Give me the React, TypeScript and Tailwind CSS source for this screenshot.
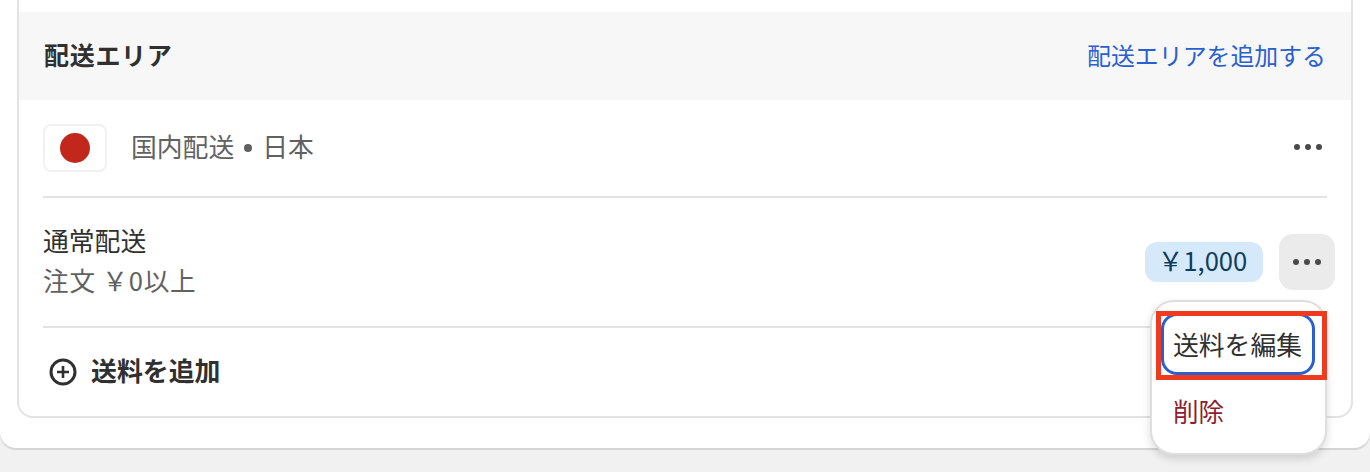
const font = { cjk: "font-['Noto_Sans_CJK_JP','Noto_Sans',sans-serif]" };

function Dots() {
  return (
    <span className="flex items-center gap-[5px]">
      <span className="w-[6px] h-[6px] rounded-full bg-[#4a4a4a]" />
      <span className="w-[6px] h-[6px] rounded-full bg-[#4a4a4a]" />
      <span className="w-[6px] h-[6px] rounded-full bg-[#4a4a4a]" />
    </span>
  );
}

export default function App() {
  return (
    <div className={`relative h-[472px] w-[1370px] overflow-hidden bg-[#f1f1f1] ${font.cjk}`}>
      {/* Outer card */}
      <div className="h-[448px] bg-white rounded-b-[16px] pl-[17px] pr-[17px] shadow-[0_2px_1px_#d4d4d4]">
        {/* Shipping zone panel */}
        <div className="h-[418px] pt-[12px] border-x-[2px] border-b-[2px] border-[#e3e3e3] rounded-b-[16px]">
          <div className="h-[88px] bg-[#f7f7f7] flex items-center justify-between pl-[25px] pr-[25px] pb-[3px]">
            <h2 className="text-[25px] font-bold text-[#303030] tracking-[0.7px]">配送エリア</h2>
            <a className="text-[23.9px] text-[#2a5fcf]">配送エリアを追加する</a>
          </div>

          <div className="mx-[24px]">
            <div className="h-[98px] flex items-center border-b-[2px] border-[#e3e3e3]">
              <div className="w-[64px] h-[48px] flex items-center justify-center border-[2px] border-[#f1f1f1] rounded-[8px]">
                <span className="w-[30px] h-[30px] rounded-full bg-[#c1281b]" />
              </div>
              <span className="ml-[24px] mb-[3px] flex items-center text-[25.8px] text-[#616161]">
                国内配送
                <span className="mx-[10px] mt-[3px] w-[8px] h-[8px] rounded-full bg-[#616161]" />
                日本
              </span>
              <span className="ml-auto mr-[5px] mb-[2px]">
                <Dots />
              </span>
            </div>

            <div className="h-[130px] flex items-center border-b-[2px] border-[#e3e3e3]">
              <div className="flex flex-col mb-[4px]">
                <span className="text-[25.8px] leading-[40px] text-[#303030]">通常配送</span>
                <span className="text-[25.6px] leading-[40px] text-[#616161] tracking-[0.8px]">注文 ￥0以上</span>
              </div>
              <div className="ml-auto mr-[-8px] flex items-center gap-[16px]">
                <span className="h-[40px] w-[118px] pr-[3px] pb-[3px] flex items-center justify-center rounded-[12px] bg-[#d5e9fb] text-[25.6px] text-[#103d5c]">
                  ￥1,000
                </span>
                <span className="w-[56px] h-[56px] flex items-center justify-center rounded-[14px] bg-[#ebebeb]">
                  <Dots />
                </span>
              </div>
            </div>

            <div className="h-[88px] flex items-center pl-[6px] pb-[3px]">
              <svg width="28" height="28" viewBox="0 0 28 28" fill="none" stroke="#303030" strokeWidth="3" className="mt-[3px]">
                <circle cx="14" cy="14" r="12" />
                <path d="M14 8v12M8 14h12" strokeWidth="2.6" />
              </svg>
              <span className="ml-[14px] text-[25.9px] font-bold text-[#303030]">送料を追加</span>
            </div>
          </div>
        </div>
      </div>

      {/* Action menu */}
      <div className="absolute left-[1150px] top-[300px] w-[177px] h-[155px] bg-white rounded-[24px] border-[2px] border-[#dedede] shadow-[0_4px_8px_rgba(0,0,0,0.14)]">
        <div className="absolute left-[9px] top-[11px] w-[154px] h-[62px] flex items-center pl-[9px] border-[3px] border-[#2a5fcf] rounded-[16px] text-[25.8px] text-[#303030] whitespace-nowrap">
          送料を編集
        </div>
        <div className="absolute left-[21px] top-[90px] text-[25.6px] text-[#8e1f2d]">削除</div>
      </div>

      {/* Annotation */}
      <div className="absolute left-[1156px] top-[311px] w-[171px] h-[69px] border-[5px] border-[#ee3b1f]" />
    </div>
  );
}
